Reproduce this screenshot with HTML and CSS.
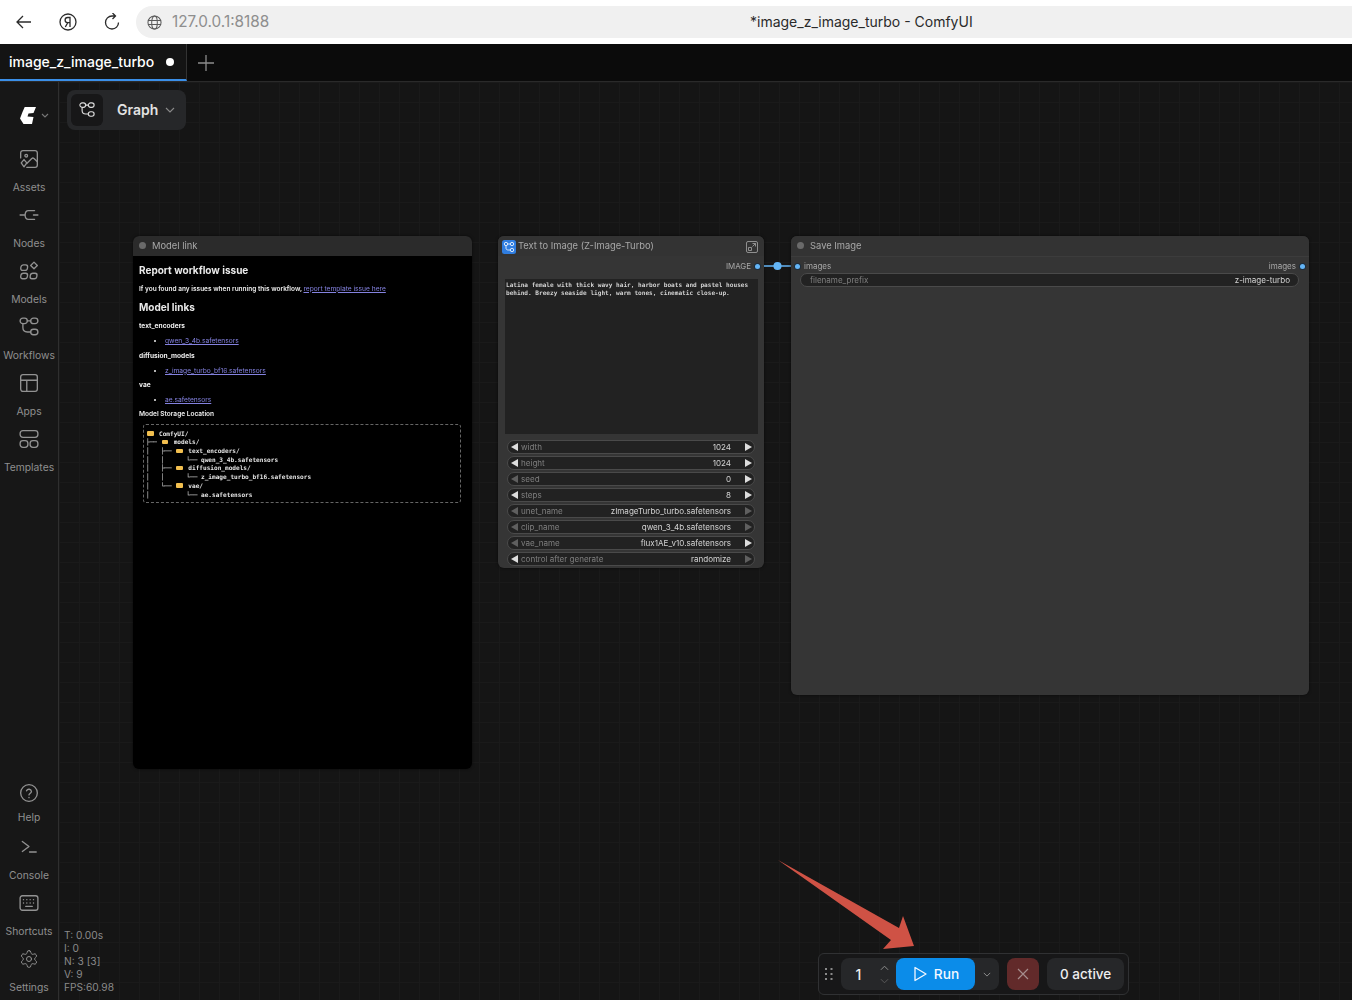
FILE: index.html
```html
<!DOCTYPE html>
<html lang="en">
<head>
<meta charset="utf-8">
<title>*image_z_image_turbo - ComfyUI</title>
<link rel="stylesheet" href="styles.css">
</head>
<body>
<header class="browser">
  <div class="nav-icons">
    <svg class="nav-icon" viewBox="0 0 18 18"><path d="M16 9H2M8 3 2 9l6 6"/></svg>
    <svg class="nav-icon" viewBox="0 0 18 18"><circle cx="9" cy="9" r="8"/><path d="M11 14V4.500H8.700a2.500 2.500 0 0 0 0 5.200H11M8.800 9.700 6.300 14"/></svg>
    <svg class="nav-icon" viewBox="0 0 18 18"><path d="M15.500 9.500A6.500 6.500 0 1 1 9 3h3M9.500 0l3 3-3 3"/></svg>
  </div>
  <div class="address">
    <svg class="globe" viewBox="0 0 16 16"><circle cx="8" cy="8" r="7"/><ellipse cx="8" cy="8" rx="3" ry="7"/><path d="M1 5.800h14M1 10.200h14"/></svg>
    <span class="url">127.0.0.1:8188</span>
    <span class="page-title">*image_z_image_turbo - ComfyUI</span>
  </div>
</header>

<nav class="tabbar">
  <div class="tab"><span class="tab-name">image_z_image_turbo</span><span class="tab-dot"></span></div>
  <svg class="tab-add" viewBox="0 0 16 16"><path d="M8 0v16M0 8h16"/></svg>
</nav>

<div class="workspace">
  <aside class="sidebar">
    <div class="logo-row">
      <svg class="logo" viewBox="0 0 16 17"><path d="M4.700 0H16l-2.500 6-5 .5-1 3 6 .5L12 17H3.500L0 11.500 2.500 5z"/></svg>
      <svg class="logo-caret" viewBox="0 0 8 5"><path d="M1 1l3 3 3-3"/></svg>
    </div>
    <div class="side-group">
      <div class="side-item">
        <svg class="side-icon" viewBox="0 0 18 18"><path d="M7 16.500h7.500a2 2 0 0 0 2-2v-11a2 2 0 0 0-2-2h-11a2 2 0 0 0-2 2V8"/><path d="m7 13 4.500-4.500a1.500 1.500 0 0 1 2 0l3 3"/><circle cx="6.500" cy="6" r="1.200"/><path d="M4.500 9.500 7 12.500 4.500 16 2 12.500z"/></svg>
        <span>Assets</span>
      </div>
      <div class="side-item">
        <svg class="side-icon" viewBox="0 0 18 18"><path d="M1 9h4.500M13 9h4M5.500 9c0-2.500 1-4 3-4h5.500M5.500 9c0 2.500 1 4 3 4h5.500"/></svg>
        <span>Nodes</span>
      </div>
      <div class="side-item">
        <svg class="side-icon" viewBox="0 0 18 18"><rect x="2.500" y="3.500" width="6" height="5" rx="2" transform="skewX(-8)"/><rect x="3.500" y="11" width="6" height="5" rx="2" transform="skewX(-8)"/><rect x="12" y="11" width="6" height="5" rx="2" transform="skewX(-8)"/><path d="m13.500 1 3 3-3 3-3-3z"/></svg>
        <span>Models</span>
      </div>
      <div class="side-item">
        <svg class="side-icon" viewBox="0 0 18 18"><rect x="1" y="1" width="6.500" height="5" rx="2.500"/><rect x="10.500" y="1" width="6.500" height="5" rx="2.500"/><rect x="10.500" y="11" width="6.500" height="5" rx="2.500"/><path d="M7.500 3.500h3M3.500 6v3.500c0 3 2 4 4 4h3"/></svg>
        <span>Workflows</span>
      </div>
      <div class="side-item">
        <svg class="side-icon" viewBox="0 0 18 18"><rect x="1.500" y="1.500" width="15" height="15" rx="2"/><path d="M1.500 6.500h15M7 6.500v10"/></svg>
        <span>Apps</span>
      </div>
      <div class="side-item">
        <svg class="side-icon" viewBox="0 0 18 18"><rect x="1" y="1.500" width="16" height="6" rx="2.500"/><rect x="1" y="10.500" width="7" height="6" rx="2.500"/><rect x="10" y="10.500" width="7" height="6" rx="2.500"/></svg>
        <span>Templates</span>
      </div>
    </div>
    <div class="side-group side-bottom">
      <div class="side-item help-item">
        <svg class="side-icon" viewBox="0 0 18 18"><circle cx="9" cy="9" r="7.500"/><path d="M6.800 7a2.300 2.300 0 0 1 4.400.7c0 1.500-2.200 2-2.200 3"/><path d="M9 13v.2"/></svg>
        <span>Help</span>
      </div>
      <div class="side-item">
        <svg class="side-icon" viewBox="0 0 18 18"><path d="m3 4 6 4.500-6 4.500M9.500 13.500h6"/></svg>
        <span>Console</span>
      </div>
      <div class="side-item">
        <svg class="side-icon" viewBox="0 0 18 18"><rect x="1" y="2.500" width="16" height="13" rx="2"/><path d="M4 6h.1M7 6h.1M10 6h.1M13 6h.1M4 9h.1M7 9h.1M10 9h.1M13 9h.1M6 12h6"/></svg>
        <span>Shortcuts</span>
      </div>
      <div class="side-item">
        <svg class="side-icon" viewBox="0 0 24 24"><path d="M12.220 2h-.440a2 2 0 0 0-2 2v.180a2 2 0 0 1-1 1.730l-.430.250a2 2 0 0 1-2 0l-.150-.080a2 2 0 0 0-2.730.730l-.220.380a2 2 0 0 0 .730 2.730l.150.100a2 2 0 0 1 1 1.720v.510a2 2 0 0 1-1 1.740l-.150.090a2 2 0 0 0-.730 2.730l.220.380a2 2 0 0 0 2.730.730l.150-.080a2 2 0 0 1 2 0l.430.250a2 2 0 0 1 1 1.730V20a2 2 0 0 0 2 2h.440a2 2 0 0 0 2-2v-.180a2 2 0 0 1 1-1.730l.430-.250a2 2 0 0 1 2 0l.150.080a2 2 0 0 0 2.730-.730l.220-.390a2 2 0 0 0-.730-2.730l-.150-.080a2 2 0 0 1-1-1.740v-.500a2 2 0 0 1 1-1.740l.150-.090a2 2 0 0 0 .730-2.730l-.220-.380a2 2 0 0 0-2.730-.730l-.150.080a2 2 0 0 1-2 0l-.430-.250a2 2 0 0 1-1-1.730V4a2 2 0 0 0-2-2z"/><circle cx="12" cy="12" r="3"/></svg>
        <span>Settings</span>
      </div>
    </div>
  </aside>

  <main class="canvas">
    <div class="mode-switch">
      <span class="mode-btn"><svg class="mode-icon" viewBox="0 0 18 18"><rect x="1" y="1" width="6.500" height="5" rx="2.500"/><rect x="10.500" y="1" width="6.500" height="5" rx="2.500"/><rect x="10.500" y="11" width="6.500" height="5" rx="2.500"/><path d="M7.500 3.500h3M3.500 6v3.500c0 3 2 4 4 4h3"/></svg></span>
      <span class="mode-label">Graph</span>
      <svg class="mode-caret" viewBox="0 0 10 6"><path d="M1 1l4 4 4-4"/></svg>
    </div>

    <section class="node node-note">
      <div class="node-head"><span class="status-dot"></span><span class="node-title">Model link</span></div>
      <div class="note-body">
        <h2>Report workflow issue</h2>
        <p class="note-line">If you found any issues when running this workflow, <a>report template issue here</a></p>
        <h2 class="links-head">Model links</h2>
        <h4>text_encoders</h4>
        <ul><li><a>qwen_3_4b.safetensors</a></li></ul>
        <h4>diffusion_models</h4>
        <ul><li><a>z_image_turbo_bf16.safetensors</a></li></ul>
        <h4>vae</h4>
        <ul><li><a>ae.safetensors</a></li></ul>
        <p class="storage">Model Storage Location</p>
        <pre class="tree"><span class="folder"></span> ComfyUI/
├── <span class="folder"></span> models/
│   ├── <span class="folder"></span> text_encoders/
│   │      └── qwen_3_4b.safetensors
│   ├── <span class="folder"></span> diffusion_models/
│   │      └── z_image_turbo_bf16.safetensors
│   └── <span class="folder"></span> vae/
│          └── ae.safetensors</pre>
      </div>
    </section>

    <section class="node node-sub">
      <div class="node-head">
        <svg class="sub-badge" viewBox="0 0 14 14"><rect width="14" height="14" rx="2.500"/><g><circle cx="4" cy="4" r="1.700"/><circle cx="10" cy="4" r="1.700"/><circle cx="10" cy="10" r="1.700"/><path d="M5.700 4h2.600M4 5.700V8c0 1.500 1 2 2.300 2h2"/></g></svg>
        <span class="node-title">Text to Image (Z-Image-Turbo)</span>
        <svg class="expand" viewBox="0 0 12 12"><rect x=".5" y=".5" width="11" height="11" rx="1.500"/><path d="M6.500 2.500h3v3M9.500 2.500 6.500 5.500M2.500 6.500h3v3h-3z"/></svg>
      </div>
      <div class="output-row"><span>IMAGE</span><i class="slot"></i></div>
      <div class="prompt">Latina female with thick wavy hair, harbor boats and pastel houses behind. Breezy seaside light, warm tones, cinematic close-up.</div>
      <div class="widgets">
        <div class="widget"><b class="arrow-l"></b><span class="w-name">width</span><span class="w-value">1024</span><b class="arrow-r"></b></div>
        <div class="widget"><b class="arrow-l"></b><span class="w-name">height</span><span class="w-value">1024</span><b class="arrow-r"></b></div>
        <div class="widget"><b class="arrow-l dim"></b><span class="w-name">seed</span><span class="w-value">0</span><b class="arrow-r"></b></div>
        <div class="widget"><b class="arrow-l"></b><span class="w-name">steps</span><span class="w-value">8</span><b class="arrow-r"></b></div>
        <div class="widget"><b class="arrow-l dim"></b><span class="w-name">unet_name</span><span class="w-value">zImageTurbo_turbo.safetensors</span><b class="arrow-r dim"></b></div>
        <div class="widget"><b class="arrow-l dim"></b><span class="w-name">clip_name</span><span class="w-value">qwen_3_4b.safetensors</span><b class="arrow-r dim"></b></div>
        <div class="widget"><b class="arrow-l dim"></b><span class="w-name">vae_name</span><span class="w-value">flux1AE_v10.safetensors</span><b class="arrow-r"></b></div>
        <div class="widget"><b class="arrow-l"></b><span class="w-name">control after generate</span><span class="w-value">randomize</span><b class="arrow-r dim"></b></div>
      </div>
    </section>

    <svg class="link" viewBox="0 0 27 12"><path d="M0 6h27"/><circle cx="13.500" cy="6" r="3.300"/></svg>

    <section class="node node-save">
      <div class="node-head"><span class="status-dot"></span><span class="node-title">Save Image</span></div>
      <div class="io-row"><i class="slot"></i><span class="io-in">images</span><span class="io-out">images</span><i class="slot"></i></div>
      <div class="widget prefix"><span class="w-name">filename_prefix</span><span class="w-value">z-image-turbo</span></div>
    </section>

    <div class="stats">T: 0.00s<br>I: 0<br>N: 3 [3]<br>V: 9<br>FPS:60.98</div>

    <svg class="annotation" viewBox="0 0 136 90"><path d="M0 0 121 68 125 56 136 86 105 89 113 80z"/></svg>

    <div class="runbar">
      <svg class="grip" viewBox="0 0 8 12"><path d="M0 0h2v2H0zM5.500 0h2v2h-2zM0 5h2v2H0zM5.500 5h2v2h-2zM0 10h2v2H0zM5.500 10h2v2h-2z"/></svg>
      <div class="run-group">
        <span class="count">1</span>
        <div class="stepper">
          <svg viewBox="0 0 10 6"><path d="M1 5l4-4 4 4"/></svg>
          <svg class="faded" viewBox="0 0 10 6"><path d="M1 1l4 4 4-4"/></svg>
        </div>
        <button class="run"><svg viewBox="0 0 14 16"><path d="M2 1.500v13l11-6.500z"/></svg><span>Run</span></button>
        <span class="run-caret"><svg viewBox="0 0 10 6"><path d="M1 1l4 4 4-4"/></svg></span>
      </div>
      <button class="cancel"><svg viewBox="0 0 12 12"><path d="M1 1l10 10M11 1 1 11"/></svg></button>
      <span class="active"><span class="active-text">0 active</span></span>
    </div>
  </main>
</div>
</body>
</html>
```
FILE: styles.css
```css
* { box-sizing: border-box; }
html, body { margin: 0; height: 100%; }
body {
  width: 1352px;
  height: 1000px;
  overflow: hidden;
  display: flex;
  flex-direction: column;
  background: #151515;
  font-family: Inter, "Liberation Sans", sans-serif;
}

/* Browser chrome */
.browser {
  height: 44px;
  flex: none;
  display: flex;
  align-items: center;
  padding: 0 0 0 15px;
  background: #fff;
}
.nav-icons { display: flex; gap: 26px; align-items: center; width: 121px; }
.nav-icon { width: 18px; height: 18px; fill: none; stroke: #2b2b2b; stroke-width: 1.300; }
.address {
  flex: 1;
  height: 32px;
  display: flex;
  align-items: center;
  position: relative;
  margin-right: -1px;
  padding-left: 11px;
  border-radius: 16px 0 0 16px;
  background: #f0f0f0;
}
.globe { width: 15px; height: 15px; fill: none; stroke: #5a5a5a; stroke-width: 1.100; }
.url { margin: 0 0 2px 10px; font-size: 15.300px; color: #8e8e8e; }
.page-title { position: absolute; left: 614px; margin-bottom: 2px; font-size: 14px; color: #2a2a2a; white-space: nowrap; }

/* Tabs */
.tabbar {
  height: 38px;
  flex: none;
  display: flex;
  align-items: center;
  background: #0b0b0b;
  border-bottom: 1px solid #2a2a2a;
}
.tab {
  width: 187px;
  height: 37px;
  display: flex;
  align-items: center;
  gap: 12px;
  padding: 0 9px;
  background: #141414;
  border-right: 1px solid #333;
  border-bottom: 2px solid #3b8fe8;
}
.tab-name { font-size: 14px; font-weight: 500; color: #fff; white-space: nowrap; margin-bottom: 1px; }
.tab-dot { width: 8px; height: 8px; flex: none; border-radius: 50%; background: #fff; }
.tab-add { width: 16px; height: 16px; margin-left: 11px; fill: none; stroke: #8d8d8d; stroke-width: 1.300; }

/* Sidebar */
.workspace { flex: 1; display: flex; min-height: 0; }
.sidebar {
  width: 59px;
  flex: none;
  display: flex;
  flex-direction: column;
  background: #171717;
  border-right: 1px solid #2f2f2f;
}
.logo-row { height: 50px; margin-top: 8px; display: flex; align-items: center; padding-left: 20px; gap: 5px; }
.logo { width: 16px; height: 17px; fill: #fff; }
.logo-caret { width: 8px; height: 5px; fill: none; stroke: #777; stroke-width: 1.100; }
.side-group { display: flex; flex-direction: column; }
.side-bottom { margin-top: auto; padding-bottom: 4px; }
.side-item {
  height: 56px;
  display: flex;
  flex-direction: column;
  align-items: center;
  padding-top: 9px;
  font-size: 10.300px;
  color: #8f8f8f;
  white-space: nowrap;
}
.side-item span { margin-top: 11.500px; line-height: 13px; }
.side-item.help-item { padding-top: 11px; }
.side-item.help-item span { margin-top: 8px; }
.side-icon { width: 20px; height: 20px; flex: none; fill: none; stroke: #929292; stroke-width: 1.200; stroke-linecap: round; stroke-linejoin: round; }

/* Canvas */
.canvas {
  flex: 1;
  position: relative;
  min-width: 0;
  overflow: hidden;
  background-color: #151515;
  background-image:
    linear-gradient(#1a1a1a 1px, transparent 1px),
    linear-gradient(90deg, #1a1a1a 1px, transparent 1px);
  background-size: 20px 20px;
}
.mode-switch {
  position: absolute;
  left: 8px;
  top: 8px;
  width: 119px;
  height: 40px;
  display: flex;
  align-items: center;
  padding: 0 4px;
  border-radius: 8px;
  background: #262729;
}
.mode-btn { width: 32px; height: 32px; display: flex; align-items: center; justify-content: center; border-radius: 6px; background: #171718; }
.mode-icon { width: 16px; height: 16px; fill: none; stroke: #dcdcdc; stroke-width: 1.300; }
.mode-label { margin: 0 0 2px 14px; font-size: 14px; font-weight: 600; color: #e3e3e3; }
.mode-caret { width: 10px; height: 6px; margin-left: 7px; fill: none; stroke: #8a8a8a; stroke-width: 1.100; }

/* Nodes: positions are graph coordinates */
.node {
  position: absolute;
  border-radius: 6px;
  background: #353535;
  box-shadow: 0 0 3px rgba(0,0,0,.6);
  overflow: hidden;
  will-change: transform;
}
.node-head {
  height: 20px;
  display: flex;
  align-items: center;
  padding: 0 0 2px 6px;
  background: #333;
  font-size: 9.400px;
  color: #a8a8a8;
}
.status-dot { width: 7px; height: 7px; border-radius: 50%; background: #6a6a6a; flex: none; }
.node-title { margin-left: 6px; white-space: nowrap; }

.node-note { left: 74px; top: 154px; width: 339px; height: 533px; background: #000; }
.node-note .node-head { background: #2b2b2b; }
.note-body { padding: 8px 6px; color: #eee; font-size: 6.500px; font-weight: 600; }
.note-body h2 { margin: 0; font-size: 10px; line-height: 12px; font-weight: 700; color: #eaeaea; }
.note-line { margin: 8.500px 0 0; line-height: 9px; white-space: nowrap; }
.note-body a { color: #8482e0; text-decoration: underline; font-size: 6.650px; font-weight: 400; }
.note-body h2.links-head { margin-top: 7.500px; }
.note-body h4 { margin: 6.500px 0 0; font-size: 6.600px; line-height: 8px; font-weight: 700; }
.note-body h2.links-head + h4 { margin-top: 9px; }
.note-body ul { margin: 7px 0 0; padding-left: 26px; line-height: 8px; }
.storage { margin: 5.600px 0 0; line-height: 8px; font-size: 6.550px; font-weight: 600; }
.tree {
  margin: 6px 5px 0 4px;
  height: 79px;
  padding: 5px 2px 0;
  border: 1px dashed #666;
  border-radius: 3px;
  font-family: "DejaVu Sans Mono", "Liberation Mono", monospace;
  font-size: 6.100px;
  line-height: 8.700px;
  font-weight: 600;
  color: #e6e6e6;
}
.folder {
  display: inline-block;
  width: 6.500px;
  height: 4.500px;
  margin: 0 1.800px 0 1px;
  border-radius: 1px;
  background: #f2bf4f;
}

.node-sub { left: 439px; top: 154px; width: 266px; height: 332px; }
.node-sub .node-head { padding-left: 4px; position: relative; }
.sub-badge { width: 14px; height: 14px; flex: none; margin-top: 3px; }
.sub-badge rect { fill: #2f7de0; }
.sub-badge g { fill: none; stroke: #fff; stroke-width: .8; }
.node-sub .node-title { margin-left: 2px; }
.expand { width: 12px; height: 12px; margin: 3px 6px 0 auto; fill: none; stroke: #9a9a9a; stroke-width: .9; }
.output-row {
  height: 20px;
  display: flex;
  align-items: center;
  justify-content: flex-end;
  gap: 4px;
  padding-right: 4px;
  font-size: 7.900px;
  color: #a8a8a8;
}
.slot { width: 5px; height: 5px; border-radius: 50%; background: #64b5f6; display: block; box-shadow: 0 0 0 1px #1d2d3d; flex: none; }
.prompt {
  margin: 3px 6px 0 7px;
  height: 155px;
  padding: 2px 1px;
  background: #222;
  font-family: "DejaVu Sans Mono", "Liberation Mono", monospace;
  font-size: 6.100px;
  line-height: 8px;
  font-weight: 600;
  color: #d2d2d2;
}
.widgets { margin: 6px 9px 0; display: flex; flex-direction: column; gap: 2px; }
.widget {
  height: 14px;
  display: flex;
  align-items: center;
  padding: 0 2px 0 3px;
  border: 1px solid #4a4a4a;
  border-radius: 7px;
  background: #222;
  font-size: 8.050px;
  white-space: nowrap;
}
.w-name { color: #7f7f7f; margin-left: 3px; }
.w-value { margin-left: auto; margin-right: 14px; color: #d4d4d4; }
.arrow-l, .arrow-r { width: 0; height: 0; border-top: 4px solid transparent; border-bottom: 4px solid transparent; flex: none; }
.arrow-l { border-right: 7px solid #dddddd; }
.arrow-r { border-left: 7px solid #dddddd; }
.arrow-l.dim { border-right-color: #5f5f5f; }
.arrow-r.dim { border-left-color: #5f5f5f; }

.link { position: absolute; left: 705px; top: 177.500px; width: 27px; height: 12px; fill: #64b5f6; stroke: #64b5f6; stroke-width: 1.500; }

.node-save { left: 732px; top: 154px; width: 518px; height: 459px; }
.io-row {
  height: 19px;
  display: flex;
  align-items: center;
  padding: 0 4px;
  border-top: 1px solid #3c3c3c;
  font-size: 8px;
  color: #a8a8a8;
}
.io-in { margin-left: 4px; }
.io-out { margin-left: auto; margin-right: 4px; }
.prefix { margin: -2px 10px 0 9px; }
.prefix .w-name { margin-left: 6px; }
.prefix .w-value { margin-right: 6px; }

.stats { position: absolute; left: 5px; top: 847px; font-size: 10.200px; line-height: 13px; color: #8a8a8a; }

.annotation { position: absolute; left: 719px; top: 778px; width: 136px; height: 90px; fill: #cf5245; }

/* Run bar */
.runbar {
  position: absolute;
  left: 759px;
  top: 871px;
  width: 311px;
  height: 42px;
  display: flex;
  align-items: center;
  padding: 0 4px 0 6px;
  border: 1px solid #303133;
  border-radius: 6px;
  background: #171718;
}
.grip { width: 8px; height: 12px; flex: none; fill: #8a8a8a; }
.run-group {
  width: 159px;
  height: 32px;
  margin-left: 8px;
  display: flex;
  align-items: center;
  border-radius: 8px;
  background: #262729;
}
.count { width: 35px; text-align: center; font-size: 14px; font-weight: 500; color: #eee; }
.stepper { width: 16px; display: flex; flex-direction: column; align-items: center; gap: 7px; }
.stepper svg { width: 9px; height: 6px; fill: none; stroke: #8e8e8e; stroke-width: 1.100; }
.stepper .faded { stroke: #5a5a5a; }
.run {
  width: 79px;
  height: 32px;
  margin-left: 4px;
  display: flex;
  align-items: center;
  justify-content: center;
  gap: 7px;
  padding: 0 0 0 1px;
  border: 0;
  border-radius: 8px;
  background: #0b8ce9;
  color: #f4f8ff;
  font: 500 13.700px Inter, "Liberation Sans", sans-serif;
}
.run svg { width: 14px; height: 16px; fill: none; stroke: #f4f8ff; stroke-width: 1.300; stroke-linejoin: round; }
.run-caret { flex: 1; display: flex; justify-content: center; }
.run-caret svg { width: 8px; height: 5px; fill: none; stroke: #9a9a9a; stroke-width: 1.100; }
.cancel {
  width: 32px;
  height: 32px;
  margin-left: 8px;
  display: flex;
  align-items: center;
  justify-content: center;
  padding: 0;
  border: 0;
  border-radius: 8px;
  background: #622a2a;
}
.cancel svg { width: 12px; height: 12px; fill: none; stroke: #a58c8c; stroke-width: 1.200; }
.active {
  width: 77px;
  height: 32px;
  margin-left: 8px;
  display: flex;
  align-items: center;
  justify-content: center;
  border-radius: 8px;
  background: #262729;
  font-size: 13.500px;
  font-weight: 500;
  color: #eee;
}
```
